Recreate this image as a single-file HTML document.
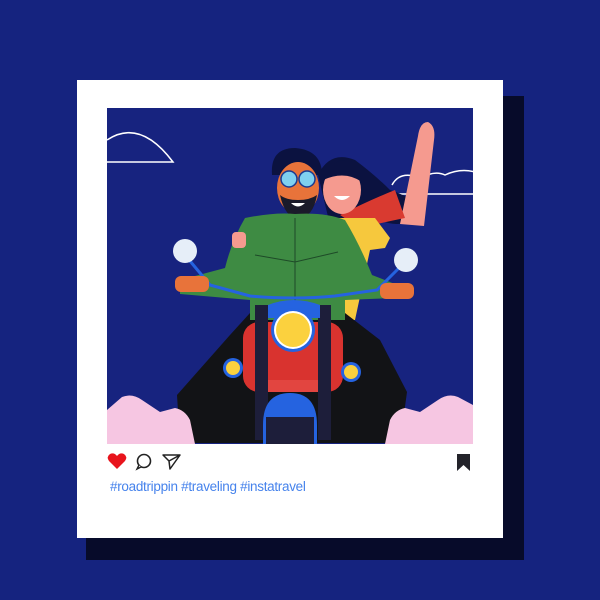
<!DOCTYPE html>
<html><head><style>
html,body{margin:0;padding:0;width:600px;height:600px;background:#15237f;overflow:hidden}
.t{position:absolute;left:110px;top:479px;font:13.5px "Liberation Sans",sans-serif;color:#4683ec;letter-spacing:-0.3px}
</style></head><body>
<svg width="600" height="600" style="position:absolute;left:0;top:0">
<rect x="86" y="96" width="438" height="464" fill="#070b2a"/>
<rect x="77" y="80" width="426" height="458" fill="#fff"/>
<clipPath id="c"><rect x="107" y="108" width="366" height="336"/></clipPath>
<rect x="107" y="108" width="366" height="336" fill="#17237f"/>
<g clip-path="url(#c)">
<path d="M107 140 Q140 118 173 162 L107 162" fill="none" stroke="#fff" stroke-width="1.5"/>
<path d="M392 185 Q400 170 420 178 Q435 170 445 175 Q460 168 475 172 M392 194 L475 194" fill="none" stroke="#fff" stroke-width="1.5"/>
<path d="M318 175 Q330 150 355 160 Q375 175 390 190 Q420 200 425 215 Q400 230 380 220 L330 225 Z" fill="#0b1240"/>
<path d="M400 224 L418 136 Q420 122 428 122 Q436 126 434 140 L424 226 Z" fill="#f59a8f"/>
<path d="M340 215 Q370 200 395 190 L405 218 Q385 222 360 228 Z" fill="#d93a30"/>
<path d="M330 218 L375 218 L390 238 L385 248 L370 250 L355 320 L335 320 Z" fill="#f6c83d"/>
<ellipse cx="342" cy="190" rx="19" ry="24" fill="#f59a8f"/>
<path d="M323 180 Q330 158 350 160 Q360 168 362 182 Q345 170 323 180Z" fill="#0b1240"/>
<path d="M334 196 Q342 204 350 196Z" fill="#fff"/>
<path d="M272 175 Q270 148 295 148 Q322 150 322 175 Z" fill="#0b1240"/>
<ellipse cx="298" cy="188" rx="21" ry="26" fill="#e8733a"/>
<path d="M280 195 Q285 218 298 218 Q313 218 317 195 Q310 200 298 200 Q286 200 280 195Z" fill="#1a1a2a"/>
<path d="M291 203 Q298 210 305 203Z" fill="#fff"/>
<circle cx="289" cy="179" r="8" fill="#7fd0f0" stroke="#1a3a90" stroke-width="1.5"/>
<circle cx="307" cy="179" r="8" fill="#7fd0f0" stroke="#1a3a90" stroke-width="1.5"/>
<path d="M177 395 L230 335 L250 313 L345 313 L380 340 L407 392 L400 443 L180 443 Z" fill="#121316"/>
<path d="M245 218 Q275 212 295 214 Q325 212 345 220 Q360 245 372 275 L395 284 L395 298 L345 300 L345 320 L250 320 L250 300 L180 294 L180 280 L225 268 Q232 240 245 218Z" fill="#3e8b43"/>
<path d="M295 218 L295 312 M255 255 L295 262 L338 252" stroke="#1e4a28" fill="none" stroke-width="1"/>
<rect x="232" y="232" width="14" height="16" rx="4" fill="#f59a8f"/>
<path d="M185 255 L210 285 L250 296 Q295 300 335 296 L377 290 L405 262" stroke="#2563e0" stroke-width="3" fill="none"/>
<circle cx="185" cy="251" r="12" fill="#e6eef8"/>
<circle cx="406" cy="260" r="12" fill="#e6eef8"/>
<rect x="175" y="276" width="34" height="16" rx="6" fill="#e8733a"/>
<rect x="380" y="283" width="34" height="16" rx="6" fill="#e8733a"/>
<rect x="243" y="322" width="100" height="70" rx="16" fill="#d9332f"/>
<rect x="262" y="380" width="62" height="12" fill="#e24540"/>
<rect x="255" y="305" width="13" height="135" fill="#1d1e3a"/>
<rect x="318" y="305" width="13" height="135" fill="#1d1e3a"/>
<path d="M268 305 Q293 295 320 305 L320 318 L268 318Z" fill="#2563e0"/>
<circle cx="293" cy="330" r="22" fill="#2563e0"/>
<circle cx="293" cy="330" r="19" fill="#fff"/>
<circle cx="293" cy="330" r="17" fill="#fbd13e"/>
<circle cx="233" cy="368" r="10" fill="#2563e0"/><circle cx="233" cy="368" r="7" fill="#fbd13e"/>
<circle cx="351" cy="372" r="10" fill="#2563e0"/><circle cx="351" cy="372" r="7" fill="#fbd13e"/>
<path d="M263 444 L263 425 Q263 393 290 393 Q317 393 317 425 L317 444Z" fill="#2563e0"/>
<path d="M266 417 L314 417 L314 444 L266 444Z" fill="#1d1e3a"/>
<path d="M107 410 L122 397 Q132 393 142 400 L160 412 L175 408 Q185 410 190 420 L195 444 L107 444Z" fill="#f6c6e2"/>
<path d="M473 405 L458 397 Q448 393 438 400 L420 412 L405 408 Q395 410 390 420 L385 444 L473 444Z" fill="#f6c6e2"/>
</g>
<path d="M117 469 L109 461 Q106 457 110 454 Q114 452 117 456 Q120 452 124 454 Q128 457 125 461Z" fill="#e8141c"/>
<circle cx="144" cy="461" r="6.5" fill="none" stroke="#222" stroke-width="1.6"/>
<path d="M139 465 L137 469 L141 467" fill="#fff" stroke="#222" stroke-width="1.4"/>
<path d="M163 455 L180 455 L170 469 L169 461 Z M169 461 L180 455" fill="none" stroke="#222" stroke-width="1.5" stroke-linejoin="round"/>
<path d="M457 454 L470 454 L470 471 L463.5 465 L457 471Z" fill="#23232a"/>
</svg>
<div class="t">#roadtrippin #traveling #instatravel</div>
</body></html>
